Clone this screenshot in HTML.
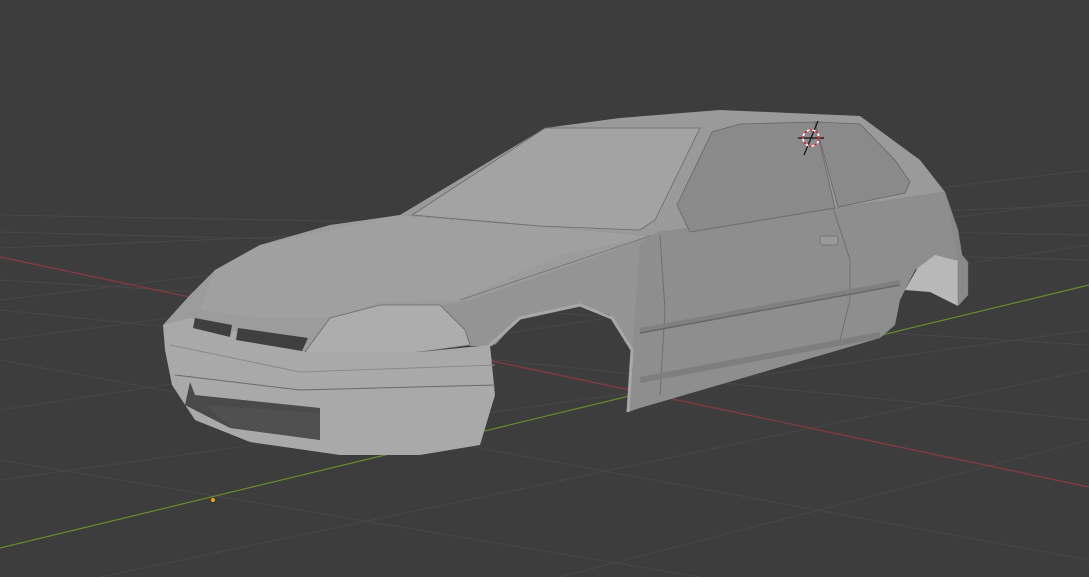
<!DOCTYPE html>
<html><head><meta charset="utf-8"><style>
html,body{margin:0;padding:0;background:#3d3d3d;overflow:hidden}
svg{display:block}
</style></head><body>
<svg width="1089" height="577" viewBox="0 0 1089 577" xmlns="http://www.w3.org/2000/svg">
<rect width="1089" height="577" fill="#3d3d3d"/>
<g stroke="#474747" stroke-width="1" fill="none">
<line x1="0" y1="215" x2="1089" y2="235"/>
<line x1="0" y1="232" x2="1089" y2="260"/>
<line x1="0" y1="280" x2="1089" y2="345"/>
<line x1="0" y1="310" x2="1089" y2="420"/>
<line x1="0" y1="360" x2="1089" y2="560"/>
<line x1="0" y1="460" x2="700" y2="577"/>
<line x1="0" y1="300" x2="1089" y2="170"/>
<line x1="0" y1="340" x2="1089" y2="200"/>
<line x1="0" y1="410" x2="1089" y2="245"/>
<line x1="0" y1="480" x2="1089" y2="330"/>
<line x1="100" y1="577" x2="1089" y2="370"/>
<line x1="560" y1="577" x2="1089" y2="440"/>
<line x1="0" y1="248" x2="1089" y2="205"/>
</g>
<line x1="0" y1="257" x2="1089" y2="487" stroke="#8a3a44" stroke-width="1.2"/>
<line x1="0" y1="548" x2="1089" y2="285" stroke="#6a8a2e" stroke-width="1.2"/>
<circle cx="213" cy="500" r="2.5" fill="#f0a020" stroke="#222" stroke-width="0.6"/>

<!-- rear arch interior -->
<path d="M905,290 L925,255 L958,255 L968,262 L966,295 L958,306 L930,292 Z" fill="#b8b8b8"/>
<!-- body side -->
<path d="M640,240 L660,232 L855,205 L945,192 L958,230 L962,262 L935,255 L915,270 L900,300 L895,325 L880,338 L640,408 L628,412 L632,350 L610,315 L580,305 L520,318 L495,345 L480,330 L470,300 L520,270 Z" fill="#8e8e8e"/>
<!-- front fender -->
<path d="M430,306 L470,298 L600,250 L650,236 L640,245 L632,350 L610,315 L580,305 L520,318 L492,346 L470,346 Z" fill="#949494"/>
<!-- main upper/hood -->
<path d="M163,325 L190,295 L215,270 L260,245 L330,225 L400,215 L470,222 L560,228 L650,236 L600,255 L470,300 L440,305 L340,318 L305,352 L190,330 Z" fill="#9c9c9c"/>
<!-- hood highlight -->
<path d="M215,270 L260,245 L400,215 L560,228 L650,236 L560,255 L460,300 L380,302 L330,318 L260,318 L200,310 Z" fill="#a0a0a0"/>
<!-- roof + greenhouse -->
<path d="M400,215 L545,128 L620,118 L720,110 L860,116 L920,160 L945,192 L855,205 L660,232 L650,236 L560,228 Z" fill="#9a9a9a"/>
<!-- windshield -->
<path d="M412,215 L545,128 L700,128 L655,220 L640,230 L540,226 Z" fill="#a3a3a3" stroke="#6a6a6a" stroke-width="0.8"/>
<!-- side windows -->
<path d="M677,205 L712,132 L740,124 L815,122 L835,208 L690,232 Z" fill="#8a8a8a" stroke="#666" stroke-width="0.8"/>
<path d="M815,122 L860,124 L895,160 L910,182 L905,193 L838,207 Z" fill="#8a8a8a" stroke="#666" stroke-width="0.8"/>
<!-- side lines -->
<path d="M660,235 L665,310 L660,395" stroke="#6e6e6e" fill="none"/>
<path d="M833,208 L850,260 L850,300 L840,340" stroke="#6e6e6e" fill="none"/>
<path d="M640,330 L900,282" stroke="#808080" stroke-width="4" fill="none"/>
<path d="M640,333 L900,285" stroke="#666" stroke-width="1.5" fill="none"/>
<path d="M640,380 L880,335" stroke="#7e7e7e" stroke-width="6" fill="none"/>
<rect x="820" y="236" width="18" height="9" rx="2" fill="#999" stroke="#6a6a6a" stroke-width="0.7"/>
<!-- front wheel arch edge -->
<path d="M490,345 L520,318 L580,305 L612,318 L632,350 L628,412" stroke="#a8a8a8" stroke-width="3" fill="none"/>
<!-- hood line -->
<path d="M460,300 L650,236" stroke="#7a7a7a" fill="none"/>
<!-- headlight -->
<path d="M305,352 L330,318 L380,305 L440,305 L465,330 L470,345 L420,352 L350,357 Z" fill="#adadad" stroke="#6a6a6a" stroke-width="0.8"/>
<!-- bumper -->
<path d="M163,325 L190,318 L305,352 L420,352 L490,345 L495,395 L480,445 L420,455 L340,455 L250,442 L195,420 L172,385 L165,350 Z" fill="#a9a9a9"/>
<path d="M170,345 L300,372 L495,365" stroke="#8a8a8a" fill="none"/>
<path d="M175,375 L300,390 L495,385" stroke="#6a6a6a" fill="none"/>
<!-- grille -->
<path d="M195,318 L232,325 L230,337 L193,328 Z" fill="#3f3f3f"/>
<path d="M238,328 L308,338 L302,351 L236,340 Z" fill="#3f3f3f"/>
<!-- lower opening -->
<path d="M190,382 L195,395 L320,408 L320,440 L230,428 L185,405 Z" fill="#4a4a4a"/>
<path d="M205,405 L320,413 L320,440 L232,428 Z" fill="#505050"/>
<!-- rear bumper bit -->
<path d="M945,192 L958,230 L962,255 L968,262 L968,295 L958,306 L958,262" fill="#8a8a8a" stroke="#777" stroke-width="0.5"/>
<!-- 3d cursor -->
<g>
<line x1="804" y1="155" x2="818" y2="121" stroke="#111" stroke-width="1.2"/>
<line x1="798" y1="138" x2="824" y2="138" stroke="#111" stroke-width="1.2"/>
<circle cx="811" cy="138" r="8" fill="none" stroke="#fff" stroke-width="1.6"/>
<circle cx="811" cy="138" r="8" fill="none" stroke="#d02020" stroke-width="1.6" stroke-dasharray="3 3"/>
</g>
</svg>
</body></html>
